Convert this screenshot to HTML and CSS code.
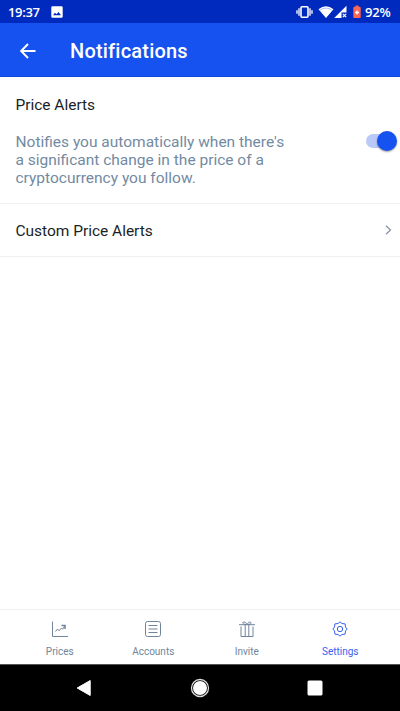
FILE: index.html
```html
<!DOCTYPE html>
<html lang="en">
<head>
<meta charset="utf-8">
<title>Notifications</title>
<link rel="stylesheet" href="styles.css">
</head>
<body>
<div class="screen">
  <div class="status">
    <span class="time">19:37</span>
    <svg class="photo" width="12" height="12" viewBox="0 0 12 12"><path fill="#fff" fill-rule="evenodd" d="M1.5.3h9q1.2 0 1.2 1.2v9q0 1.2-1.2 1.2h-9Q.3 11.700.3 10.500v-9Q.3.3 1.500.3ZM2 9.300h8L7.500 6 5.500 8.300 4 6.800Z"/></svg>
    <div class="indicators">
      <svg width="17" height="14" viewBox="0 0 17 14"><rect x="5" y="1.700" width="7" height="10.600" rx="1" fill="none" stroke="#fff" stroke-width="1.600"/><path d="M3 3.200v7.600M14 3.200v7.600M1 5.200v3.600M16 5.200v3.600" stroke="#e3e9ff" stroke-width="1.500"/></svg>
      <svg class="wifi" width="16" height="14" viewBox="0 0 16 14"><path d="M.5 4.300Q8-1.800 15.500 4.300L8 13Z" fill="#fff"/><path d="M2 5.200Q8 .9 14 5.200" fill="none" stroke="#8ca0e8" stroke-width=".7"/></svg>
      <svg class="signal" width="13" height="14" viewBox="0 0 13 14"><path d="M12.500.700V7.500H7.500v5.500H.2Z" fill="#fff"/><path d="m8.800 8.800 3.400 3.400m0-3.400-3.400 3.400" stroke="#fff" stroke-width="1.200"/></svg>
      <svg class="battery" width="8" height="14" viewBox="0 0 8 14"><path d="M2.500.5h3v1.200h1q1.200 0 1.200 1.200v9q0 1.200-1.200 1.200h-5Q.3 13.100.3 11.900v-9Q.3 1.700 1.500 1.700h1Z" fill="#ff6550"/><path d="M4 5.500v4M2 7.500h4" stroke="#fff" stroke-width="1.300"/></svg>
      <span class="percent">92%</span>
    </div>
  </div>
  <header class="header">
    <svg width="16" height="16" viewBox="0 0 16 16"><path d="M15.500 8H1.500M8 1 1.200 8 8 15" fill="none" stroke="#fff" stroke-width="1.900"/></svg>
    <h1>Notifications</h1>
  </header>
  <main>
    <section class="alerts">
      <h2>Price Alerts</h2>
      <div class="setting">
        <p>Notifies you automatically when there's<br>a significant change in the price of a<br>cryptocurrency you follow.</p>
        <div class="switch"><span class="knob"></span></div>
      </div>
    </section>
    <section class="custom">
      <h2>Custom Price Alerts</h2>
      <svg width="7" height="10" viewBox="0 0 7 10"><path d="m1 .8 4.500 4.200L1 9.200" fill="none" stroke="#8190a3" stroke-width="1.200"/></svg>
    </section>
  </main>
  <nav class="tabs">
    <div class="tab">
      <svg width="18" height="18" viewBox="0 0 18 18"><path d="M1.500 1.500v15H17M4.500 11.500l2-2.500 1.700 1.700L10.500 8l1.200 1.200L14 5.500"/><path d="M10.500 5.500H14V9" stroke-width="1.500"/></svg>
      <span>Prices</span>
    </div>
    <div class="tab">
      <svg width="18" height="18" viewBox="0 0 18 18"><rect x="1.500" y="1.500" width="15" height="15" rx="2"/><path d="M4.500 5.500h9M4.500 9h9M4.500 12.500h9"/></svg>
      <span>Accounts</span>
    </div>
    <div class="tab">
      <svg width="18" height="18" viewBox="0 0 18 18"><path d="M1 4.700h16M3 6.500v10h12v-10M7.200 5v11.500M10.800 5v11.500M8.800 4.500C4 4.500 4 2 6 2S8 3 9 4.500C10 3 10.500 2 12 2s2 2.500-2.800 2.500"/></svg>
      <span>Invite</span>
    </div>
    <div class="tab active">
      <svg width="18" height="18" viewBox="0 0 18 18"><path stroke-linejoin="round" d="M9 1.800 10.900 3.500 14.100 3.900 14.500 7.100 16.200 9 14.500 10.900 14.100 14.100 10.900 14.500 9 16.200 7.100 14.500 3.900 14.100 3.500 10.900 1.800 9 3.500 7.100 3.900 3.900 7.100 3.500Z"/><circle cx="9" cy="9" r="2.700"/></svg>
      <span>Settings</span>
    </div>
  </nav>
  <div class="system">
    <svg width="16" height="18" viewBox="0 0 16 18"><path d="M1.200 9 14.200 1.500v15Z" fill="#fff" stroke="#fff" stroke-linejoin="round"/></svg>
    <svg width="20" height="20" viewBox="0 0 20 20"><circle cx="10" cy="10" r="8.500" fill="none" stroke="#ddd" stroke-width="1.300"/><circle cx="10" cy="10" r="7" fill="#fff"/></svg>
    <svg width="16" height="16" viewBox="0 0 16 16"><rect x=".5" y=".5" width="15" height="15" rx="1.500" fill="#fff"/></svg>
  </div>
</div>
</body>
</html>
```
FILE: styles.css
```css
* { box-sizing: border-box; }
body { margin: 0; font-family: Roboto, sans-serif; }
svg { display: block; flex: none; }
h1, h2, p { margin: 0; }
.screen { width: 400px; height: 711px; display: flex; flex-direction: column; background: #fff; overflow: hidden; }
.status { height: 23px; flex: none; display: flex; align-items: center; background: #0029bd; color: #fff; padding: 1px 8px 0; }
.time, .percent { font: 600 13px/20px "Open Sans", sans-serif; }
.time { width: 31px; letter-spacing: -.35px; }
.photo { margin-left: 12px; }
.indicators { display: flex; align-items: center; margin-left: auto; }
.wifi { margin-left: 5px; }
.signal { margin-left: 0; }
.battery { margin-left: 6px; }
.percent { margin-left: 4px; width: 27px; white-space: nowrap; letter-spacing: -.2px; }
.header { height: 54px; flex: none; display: flex; align-items: center; padding: 2px 20px 0; background: #1652f0; border-bottom: 1px solid #1046df; color: #fff; }
.header h1 { margin-left: 34px; padding-top: 1px; font-size: 20px; line-height: 24px; font-weight: 500; letter-spacing: .2px; }
main { flex: 1; }
h2 { font-size: 15.500px; line-height: 20px; font-weight: 400; letter-spacing: -.02px; color: #1a1f26; }
.alerts { height: 127px; padding: 18px 3px 0 15.500px; border-bottom: 1px solid #f0f0f2; }
.setting { display: flex; justify-content: space-between; margin-top: 18px; }
.setting p { font-size: 15.500px; line-height: 18px; font-weight: 400; color: #738aa2; white-space: nowrap; }
.switch { width: 31px; height: 20px; display: flex; align-items: center; justify-content: flex-end; margin-top: -2.500px; position: relative; }
.switch::before { content: ""; position: absolute; left: 0; top: 3px; width: 24px; height: 14px; border-radius: 7px; background: #b9caf9; }
.knob { position: relative; width: 20px; height: 20px; border-radius: 50%; background: #1652f0; box-shadow: 0 1px 2px #0006; }
.custom { height: 53px; display: flex; align-items: center; justify-content: space-between; padding: 0 8px 0 15.500px; border-bottom: 1px solid #f0f0f2; }
.custom h2 { padding-top: 2px; }
.tabs { height: 55px; flex: none; display: grid; grid-template-columns: repeat(4, 1fr); padding: 0 13px; border-top: 1px solid #f0f0f2; }
.tab { display: flex; flex-direction: column; align-items: center; padding-top: 10px; color: #71859a; font-size: 10px; line-height: 12px; }
.tab svg { fill: none; stroke: currentColor; stroke-width: 1; }
.tab span { margin-top: 8px; }
.active { color: #3961ed; }
.system { height: 47px; flex: none; display: flex; align-items: center; justify-content: space-between; padding: 0 77px 0 76px; background: #000; border-top: 1px solid #555; }
```
